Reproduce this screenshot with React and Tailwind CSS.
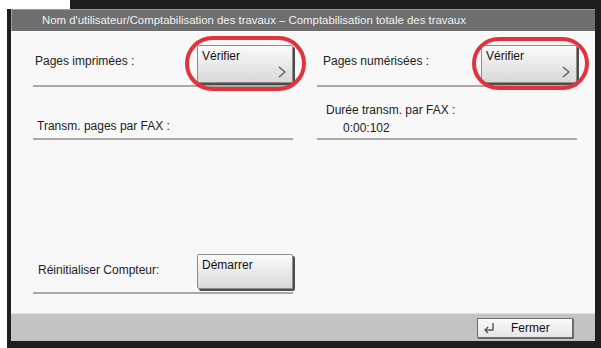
import React from "react";

const font = { fontFamily: '"Liberation Sans", Arial, sans-serif' };

const Chevron = () => (
  <svg width="8" height="12" viewBox="0 0 8 12" className="absolute right-[6px] bottom-[4px]">
    <polyline points="1,1 7,6 1,11" fill="none" stroke="#5a5a5a" strokeWidth="1.3" />
  </svg>
);

const PanelButton = ({ label, chevron, height = "h-[38px]" }) => (
  <div
    className={`relative w-[96px] ${height} shrink-0 rounded-[2px] border border-[#8c8c8c] bg-gradient-to-b from-[#fbfbfb] to-[#d9d9d9] shadow-[2px_2px_0_#4d4d4d] pl-[4px] pt-[3px] text-[12px] leading-[14px] text-[#111]`}
  >
    {label}
    {chevron && <Chevron />}
  </div>
);

const Ring = ({ className }) => (
  <div className={`absolute rounded-[30px] border-[4px] border-[#e2323c] pointer-events-none ${className}`} />
);

const App = () => {
  return (
    <div className="w-[601px] h-[348px] bg-white flex flex-col overflow-hidden" style={font}>
      <div className="h-[9px] flex shrink-0">
        <div className="w-[70px] bg-white" />
        <div className="flex-1 bg-[#1e1e1e]" />
      </div>
      <div className="flex-1 flex pl-[7px]">
        <div className="flex-1 flex flex-col bg-[#1e1e1e] pl-[4px] pr-[6px] pb-[7px]">
          {/* title */}
          <div className="h-[22px] shrink-0 bg-[#6f6f6f] border-t border-l border-[#9d9d9d] flex items-center pl-[30px] text-[11.4px] text-[#f2f2f2] whitespace-nowrap">
            Nom d'utilisateur/Comptabilisation des travaux – Comptabilisation totale des travaux
          </div>

          {/* content */}
          <div className="relative flex-1 bg-[#f8f8f8] pl-[22px] text-[12px] text-[#222]">
            <div className="grid grid-cols-[260px_260px] gap-x-[24px]">
              {/* row 1 */}
              <div className="h-[56px] flex items-end border-b-2 border-[#a9a9a9] pb-[2px]">
                <div className="w-[166px] pl-[2px] mb-[14px] leading-[16px]">Pages imprimées :</div>
                <PanelButton label="Vérifier" chevron />
              </div>
              <div className="h-[56px] flex items-end border-b-2 border-[#a9a9a9] pb-[2px]">
                <div className="w-[165px] pl-[6px] mb-[14px] leading-[16px]">Pages numérisées :</div>
                <PanelButton label="Vérifier" chevron />
              </div>

              {/* row 2 */}
              <div className="h-[53px] flex items-end border-b-2 border-[#a9a9a9]">
                <div className="pl-[4px] mb-[4px] leading-[16px]">Transm. pages par FAX :</div>
              </div>
              <div className="h-[53px] flex flex-col justify-end border-b-2 border-[#a9a9a9] pb-[2px] leading-[16px]">
                <div className="pl-[9px] mb-[2px]">Durée transm. par FAX :</div>
                <div className="pl-[26px]">0:00:102</div>
              </div>

              {/* row 3 */}
              <div className="h-[154px] flex items-end border-b-2 border-[#a9a9a9] pb-[3px]">
                <div className="w-[166px] pl-[5px] mb-[11px] leading-[16px]">Réinitialiser Compteur:</div>
                <PanelButton label="Démarrer" height="h-[35px]" />
              </div>
              <div />
            </div>

            <Ring className="left-[174px] top-[5px] w-[121px] h-[55px]" />
            <Ring className="left-[461px] top-[6px] w-[117px] h-[53px]" />
          </div>

          {/* footer */}
          <div className="h-[28px] shrink-0 bg-[#c3c3c3] border-t border-[#e2e2e2] flex justify-end items-start pt-[4px] pr-[22px]">
            <div className="relative w-[96px] h-[20px] border border-[#6e6e6e] bg-gradient-to-b from-[#fafafa] to-[#e6e6e6] shadow-[1px_1px_0_#6a6a6a] flex items-center text-[12px] text-[#111]">
              <svg width="14" height="12" viewBox="0 0 14 12" className="ml-[4px]">
                <polyline points="11,1 11,8 3,8" fill="none" stroke="#555" strokeWidth="1.4" />
                <polyline points="6,5 3,8 6,11" fill="none" stroke="#555" strokeWidth="1.4" />
              </svg>
              <span className="ml-[15px]">Fermer</span>
            </div>
          </div>
        </div>
      </div>
    </div>
  );
};

export default App;
